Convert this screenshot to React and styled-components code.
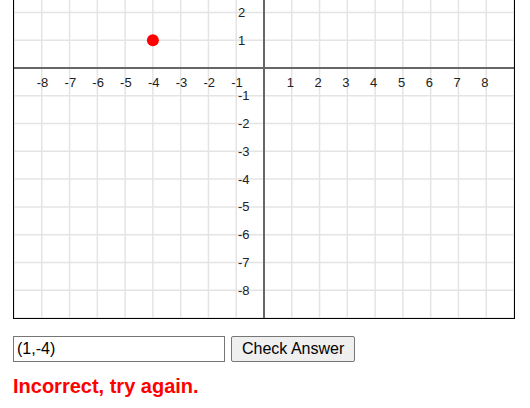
import React, { useState } from 'react';
import styled, { createGlobalStyle } from 'styled-components';

const GlobalStyle = createGlobalStyle`
    body {
        margin: 0;
        background: #fff;
        font-family: "Liberation Sans", Arial, sans-serif;
    }
`;

const Page = styled.div`
    padding-left: 13px;
`;

const GraphFrame = styled.div`
    width: 500px;
    border: 1px solid #000;
    border-top: none;
    line-height: 0;
`;

const Controls = styled.div`
    display: flex;
    align-items: center;
    gap: 6px;
    margin-top: 17px;
`;

const AnswerInput = styled.input`
    box-sizing: border-box;
    width: 212px;
    height: 26px;
    margin: 0;
    padding: 0 3px;
    border: 1px solid #767676;
    border-radius: 0;
    font-family: "Liberation Sans", Arial, sans-serif;
    font-size: 16px;
    color: #000;
    outline: none;
`;

const CheckButton = styled.button`
    box-sizing: border-box;
    height: 26px;
    margin: 0;
    padding: 0 10px;
    background: #efefef;
    border: 1px solid #767676;
    border-radius: 2px;
    font-family: "Liberation Sans", Arial, sans-serif;
    font-size: 16px;
    color: #000;
`;

const Feedback = styled.div`
    margin-top: 13px;
    font-size: 20px;
    font-weight: bold;
    color: ${p => (p.correct ? '#008000' : '#ff0000')};
`;

const SIZE = 500;
const RANGE = 9;
const STEP = SIZE / (RANGE * 2);
const C = SIZE / 2;
const TOP = 182; // first visible canvas row

const toX = v => C + v * STEP;
const toY = v => C - v * STEP;

function Graph({ point }) {
    const ticks = [];
    for (let i = -RANGE; i <= RANGE; i++) ticks.push(i);
    const labels = ticks.filter(i => i !== 0 && Math.abs(i) < RANGE);
    const yLabels = labels.filter(i => toY(i) - 6 > TOP);

    return (
        <svg width={SIZE} height={SIZE - TOP} viewBox={`0 ${TOP} ${SIZE} ${SIZE - TOP}`}>
            {ticks.map(i => (
                <g key={i} stroke="#e4e4e4" strokeWidth="1.5">
                    <line x1={toX(i)} y1="0" x2={toX(i)} y2={SIZE} />
                    <line x1="0" y1={toY(i)} x2={SIZE} y2={toY(i)} />
                </g>
            ))}
            <line x1="0" y1={C} x2={SIZE} y2={C} stroke="#666" strokeWidth="2" />
            <line x1={C} y1="0" x2={C} y2={SIZE} stroke="#666" strokeWidth="2" />
            <g fontFamily='"Liberation Sans", Arial, sans-serif' fontSize="13" fill="#222">
                {labels.map(i => (
                    <text key={'x' + i} x={toX(i) - 5} y={C + 19}>{i}</text>
                ))}
                {yLabels.map(i => (
                    <text key={'y' + i} x={C - 26} y={toY(i) + 4.5}>{i}</text>
                ))}
            </g>
            <circle cx={toX(point.x)} cy={toY(point.y)} r="6" fill="#ff0000" />
        </svg>
    );
}

export default function App() {
    const [answer, setAnswer] = useState('(1,-4)');
    const [result, setResult] = useState(false);
    const point = { x: -4, y: 1 };

    const onCheck = () => {
        const clean = answer.replace(/\s/g, '');
        setResult(clean === `(${point.x},${point.y})`);
    };

    return (
        <Page>
            <GlobalStyle />
            <GraphFrame>
                <Graph point={point} />
            </GraphFrame>
            <Controls>
                <AnswerInput value={answer} onChange={e => setAnswer(e.target.value)} />
                <CheckButton onClick={onCheck}>Check Answer</CheckButton>
            </Controls>
            <Feedback correct={result}>
                {result ? 'Correct!' : 'Incorrect, try again.'}
            </Feedback>
        </Page>
    );
}
